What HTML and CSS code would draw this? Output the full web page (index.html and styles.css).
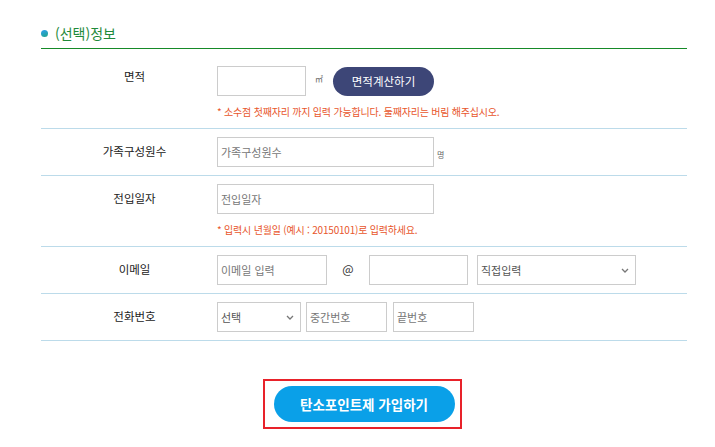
FILE: index.html
```html
<!DOCTYPE html>
<html lang="ko">
<head>
  <meta charset="UTF-8">
  <meta name="viewport" content="width=device-width, initial-scale=1.0">
  <title>(선택)정보</title>
  <link rel="stylesheet" href="styles.css">
</head>
<body>
<div class="container">
  <h3 class="section-title"><span class="dot"></span>(선택)정보</h3>

  <div class="row first">
    <div class="label">면적</div>
    <div class="value">
      <div class="line">
        <input type="text" class="w88">
        <span class="unit sq">㎡</span>
        <button class="btn-calc">면적계산하기</button>
      </div>
      <p class="note">* 소수점 첫째자리 까지 입력 가능합니다. 둘째자리는 버림 해주십시오.</p>
    </div>
  </div>

  <div class="row">
    <div class="label">가족구성원수</div>
    <div class="value">
      <div class="line">
        <input type="text" class="w216" placeholder="가족구성원수">
        <span class="unit people">명</span>
      </div>
    </div>
  </div>

  <div class="row">
    <div class="label">전입일자</div>
    <div class="value">
      <div class="line">
        <input type="text" class="w216" placeholder="전입일자">
      </div>
      <p class="note">* 입력시 년월일 (예시 : 20150101)로 입력하세요.</p>
    </div>
  </div>

  <div class="row">
    <div class="label">이메일</div>
    <div class="value">
      <div class="line">
        <input type="text" class="w109" placeholder="이메일 입력">
        <span class="at">@</span>
        <input type="text" class="w98">
        <span class="select-wrap w158">
          <select><option>직접입력</option></select>
          <svg class="arrow" width="8" height="5" viewBox="0 0 8 5"><path d="M1 1l3 3 3-3" fill="none" stroke="#777" stroke-width="1.3"/></svg>
        </span>
      </div>
    </div>
  </div>

  <div class="row">
    <div class="label">전화번호</div>
    <div class="value">
      <div class="line phone">
        <span class="select-wrap w83">
          <select><option>선택</option></select>
          <svg class="arrow" width="8" height="5" viewBox="0 0 8 5"><path d="M1 1l3 3 3-3" fill="none" stroke="#777" stroke-width="1.3"/></svg>
        </span>
        <input type="text" class="w80" placeholder="중간번호">
        <input type="text" class="w80" placeholder="끝번호">
      </div>
    </div>
  </div>

  <div class="submit-area">
    <div class="focus-box">
      <button class="btn-join">탄소포인트제 가입하기</button>
    </div>
  </div>
</div>
</body>
</html>
```

FILE: styles.css
```css
body {
  margin: 0;
  background: #fff;
  font-family: "Noto Sans CJK KR", "Noto Sans", sans-serif;
  color: #222;
}
.container {
  width: 646px;
  margin-left: 41px;
}
.section-title {
  display: flex;
  align-items: center;
  margin: 0;
  padding: 23px 0 5px;
  height: 20px;
  font-size: 14px;
  font-weight: normal;
  line-height: 20px;
  color: #1f8a3a;
  border-bottom: 1px solid #168a28;
}
.dot {
  width: 7px;
  height: 7px;
  margin-right: 7px;
  border-radius: 50%;
  background: linear-gradient(160deg, #2f9ff0, #1fa58a);
}
.row {
  display: flex;
  padding: 8px 0;
  border-bottom: 1px solid #bcdbea;
}
.row.first {
  padding-top: 17px;
}
.label {
  width: 165px;
  padding-left: 11px;
  text-align: center;
  font-size: 11.5px;
  line-height: 28px;
  color: #222;
}
.row.first .label {
  line-height: 20px;
}
.value {
  flex: 1;
}
.line {
  display: flex;
  align-items: center;
  height: 30px;
}
input, select {
  box-sizing: border-box;
  height: 30px;
  border: 1px solid #ccc;
  padding: 0 3px;
  font-family: inherit;
  font-size: 11px;
  color: #555;
  background: #fff;
  outline: none;
}
input::placeholder {
  color: #777;
}
.w88 { width: 89px; }
.w216 { width: 217px; }
.w109 { width: 110px; }
.w98 { width: 99px; }
.w80 { width: 81px; }
.unit {
  font-size: 8px;
  color: #666;
}
.sq {
  margin: 0 10px 6px 9px;
}
.people {
  margin: 4px 0 0 3px;
}
.btn-calc {
  width: 101px;
  height: 29px;
  border: none;
  border-radius: 15px;
  background: #3d4677;
  color: #fff;
  font-family: inherit;
  font-size: 11.5px;
  cursor: pointer;
}
.note {
  margin: 8px 0 0;
  font-size: 10px;
  line-height: 16px;
  letter-spacing: -0.2px;
  color: #e8562c;
}
.at {
  width: 42px;
  text-align: center;
  font-size: 12px;
  color: #333;
  margin-bottom: 4px;
}
.select-wrap {
  position: relative;
  display: inline-block;
  height: 30px;
}
.select-wrap select {
  width: 100%;
  appearance: none;
  -webkit-appearance: none;
}
.select-wrap .arrow {
  position: absolute;
  right: 7px;
  top: 13px;
}
.line .w158 {
  width: 159px;
  margin-left: 9px;
}
.line .w83 {
  width: 84px;
}
.phone {
  gap: 5px;
}
.phone input + input {
  margin-left: 1px;
}
.submit-area {
  display: flex;
  justify-content: center;
  margin-top: 38px;
}
.focus-box {
  margin-left: -4px;
  padding: 5px 5px 5px 9px;
  border: 2px solid #e8222a;
}
.btn-join {
  width: 181px;
  height: 36px;
  border: none;
  border-radius: 18px;
  background: #0aa0e8;
  color: #fff;
  font-family: inherit;
  font-size: 13.5px;
  font-weight: bold;
  cursor: pointer;
}
```
